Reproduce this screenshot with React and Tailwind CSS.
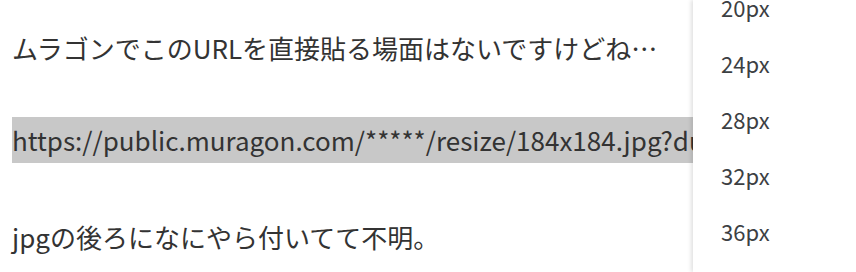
export default function App() {
    const sizes = ["20px", "24px", "28px", "32px", "36px"];

    return (
        <div className="relative w-[856px] h-[272px] overflow-hidden bg-white text-[#333] font-['Noto_Sans_CJK_JP','Noto_Sans',sans-serif]">
            <div className="pl-3 pt-[30px] flex flex-col">
                <p className="text-[26px] leading-[36px] whitespace-nowrap">ムラゴンでこのURLを直接貼る場面はないですけどね…</p>
                <div className="mt-[51px] w-[681px] h-[46px] overflow-hidden leading-[46px] bg-[#c8c8c8] text-[26px] whitespace-nowrap">
                    https://public.muragon.com/*****/resize/184x184.jpg?dummy=1234567890
                </div>
                <p className="mt-[56px] text-[26px] leading-[36px] whitespace-nowrap">jpgの後ろになにやら付いてて不明。</p>
            </div>

            <div className="absolute top-0 left-[693px] w-[200px] h-full bg-white shadow-[-2px_0_4px_rgba(0,0,0,0.12)]">
                <ul className="-mt-[21px] flex flex-col">
                    {sizes.map((s) => (
                        <li key={s} className="h-[56px] flex items-center pl-7 text-[22px] text-[#3c4043]">{s}</li>
                    ))}
                </ul>
            </div>
        </div>
    );
}
